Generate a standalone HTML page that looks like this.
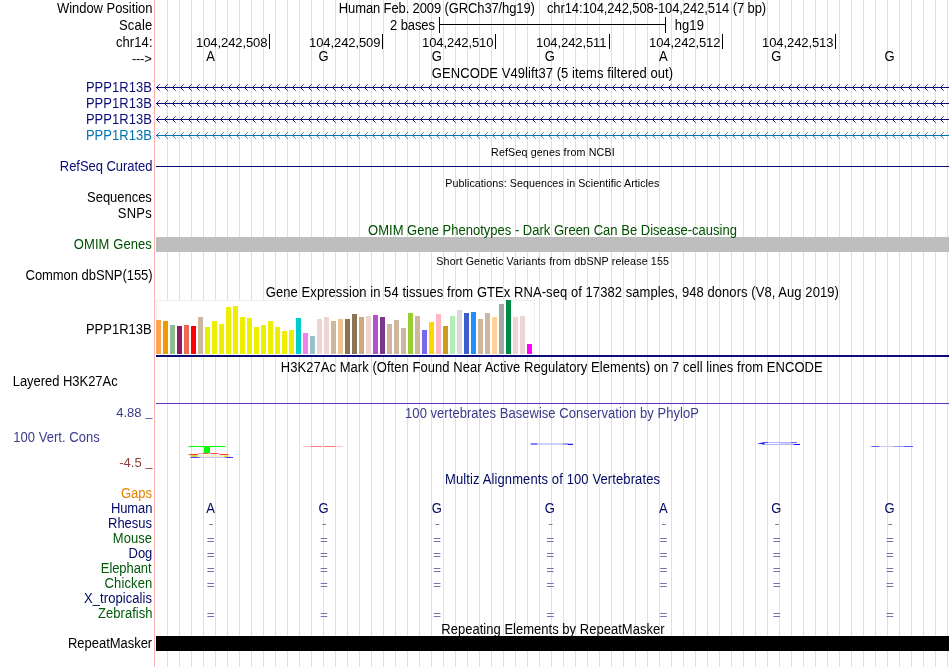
<!DOCTYPE html><html><head><meta charset="utf-8"><title>UCSC Genome Browser</title>
<style>
html,body{margin:0;padding:0;background:#fff;}
body{width:950px;height:667px;position:relative;overflow:hidden;font-family:"Liberation Sans",sans-serif;font-size:13px;color:#000;}
#w{position:absolute;left:0;top:0;width:950px;height:667px;will-change:transform;}
.t{position:absolute;white-space:pre;line-height:16px;height:16px;transform-origin:0 12px;transform:scaleY(1.06);}
.s{font-size:10.7px;}
.b{position:absolute;}
svg{position:absolute;left:0;top:0;}
</style></head><body><div id="w">
<svg width="950" height="667" shape-rendering="crispEdges"><defs><pattern id="gl" x="167" y="0" width="12" height="667" patternUnits="userSpaceOnUse"><rect x="0" y="0" width="1" height="667" fill="#dcdcff"/></pattern></defs><rect x="154" y="0" width="1" height="667" fill="#ffb4b4"/><rect x="167" y="0" width="783" height="667" fill="url(#gl)"/></svg>
<div class="b" style="left:439px;top:24px;width:227px;height:1px;background:#000"></div>
<div class="b" style="left:439px;top:17px;width:1px;height:16px;background:#000"></div>
<div class="b" style="left:665px;top:17px;width:1px;height:16px;background:#000"></div>
<div class="b" style="left:269px;top:34px;width:1px;height:15px;background:#000"></div>
<div class="b" style="left:382px;top:34px;width:1px;height:15px;background:#000"></div>
<div class="b" style="left:495px;top:34px;width:1px;height:15px;background:#000"></div>
<div class="b" style="left:609px;top:34px;width:1px;height:15px;background:#000"></div>
<div class="b" style="left:722px;top:34px;width:1px;height:15px;background:#000"></div>
<div class="b" style="left:835px;top:34px;width:1px;height:15px;background:#000"></div>
<svg width="950" height="667" shape-rendering="crispEdges"><defs><g id="cv"><path d="M1 -1h1v1h-1zM1 1h1v1h-1z" fill-opacity=".9"/><path d="M2 -2h1v1h-1zM2 2h1v1h-1z" fill-opacity=".8"/><path d="M3 -3h1v1h-1zM3 3h1v1h-1z" fill-opacity=".6"/></g><g id="c8"><use href="#cv" x="0"/><use href="#cv" x="8"/><use href="#cv" x="16"/><use href="#cv" x="24"/><use href="#cv" x="32"/><use href="#cv" x="40"/><use href="#cv" x="48"/><use href="#cv" x="56"/><use href="#cv" x="64"/><use href="#cv" x="72"/></g><g id="cr"><use href="#c8" x="0"/><use href="#c8" x="80"/><use href="#c8" x="160"/><use href="#c8" x="240"/><use href="#c8" x="320"/><use href="#c8" x="400"/><use href="#c8" x="480"/><use href="#c8" x="560"/><use href="#c8" x="640"/><use href="#cv" x="720"/><use href="#cv" x="728"/><use href="#cv" x="736"/><use href="#cv" x="744"/><use href="#cv" x="752"/><use href="#cv" x="760"/><use href="#cv" x="768"/><use href="#cv" x="776"/><use href="#cv" x="784"/></g></defs><g fill="#0c0c78"><rect x="156" y="87" width="793" height="1"/><use href="#cr" x="156" y="87"/></g><g fill="#0c0c78"><rect x="156" y="103" width="793" height="1"/><use href="#cr" x="156" y="103"/></g><g fill="#0c0c78"><rect x="156" y="119" width="793" height="1"/><use href="#cr" x="156" y="119"/></g><g fill="#0072b2"><rect x="156" y="135" width="793" height="1"/><use href="#cr" x="156" y="135"/></g><rect x="156" y="166" width="793" height="1" fill="#0c0c78"/><rect x="156" y="237" width="793" height="15" fill="#bebebe"/><rect x="156" y="300" width="379" height="55" fill="#fff"/><path d="M156.5 355V300.5H534.5V355" fill="none" stroke="#f0f0f0" stroke-width="1"/><rect x="156" y="320" width="5" height="34" fill="#FFA54F"/><rect x="163" y="321" width="5" height="33" fill="#EE9A00"/><rect x="170" y="325" width="5" height="29" fill="#8FBC8F"/><rect x="177" y="326" width="5" height="28" fill="#8B1C62"/><rect x="184" y="325" width="5" height="29" fill="#EE6A50"/><rect x="191" y="326" width="5" height="28" fill="#FF0000"/><rect x="198" y="317" width="5" height="37" fill="#CDB79E"/><rect x="205" y="327" width="5" height="27" fill="#EEEE00"/><rect x="212" y="321" width="5" height="33" fill="#EEEE00"/><rect x="219" y="324" width="5" height="30" fill="#EEEE00"/><rect x="226" y="307" width="5" height="47" fill="#EEEE00"/><rect x="233" y="306" width="5" height="48" fill="#EEEE00"/><rect x="240" y="317" width="5" height="37" fill="#EEEE00"/><rect x="247" y="318" width="5" height="36" fill="#EEEE00"/><rect x="254" y="327" width="5" height="27" fill="#EEEE00"/><rect x="261" y="325" width="5" height="29" fill="#EEEE00"/><rect x="268" y="321" width="5" height="33" fill="#EEEE00"/><rect x="275" y="327" width="5" height="27" fill="#EEEE00"/><rect x="282" y="331" width="5" height="23" fill="#EEEE00"/><rect x="289" y="330" width="5" height="24" fill="#EEEE00"/><rect x="296" y="318" width="5" height="36" fill="#00CDCD"/><rect x="303" y="333" width="5" height="21" fill="#EE82EE"/><rect x="310" y="336" width="5" height="18" fill="#9AC0CD"/><rect x="317" y="319" width="5" height="35" fill="#EED5D2"/><rect x="324" y="317" width="5" height="37" fill="#EED5D2"/><rect x="331" y="321" width="5" height="33" fill="#CDB79E"/><rect x="338" y="319" width="5" height="35" fill="#EEC591"/><rect x="345" y="319" width="5" height="35" fill="#8B7355"/><rect x="352" y="314" width="5" height="40" fill="#8B7355"/><rect x="359" y="317" width="5" height="37" fill="#CDAA7D"/><rect x="366" y="316" width="5" height="38" fill="#EED5D2"/><rect x="373" y="315" width="5" height="39" fill="#B452CD"/><rect x="380" y="317" width="5" height="37" fill="#7A378B"/><rect x="387" y="324" width="5" height="30" fill="#CDB79E"/><rect x="394" y="320" width="5" height="34" fill="#CDB79E"/><rect x="401" y="328" width="5" height="26" fill="#CDB79E"/><rect x="408" y="313" width="5" height="41" fill="#9ACD32"/><rect x="415" y="316" width="5" height="38" fill="#CDB79E"/><rect x="422" y="330" width="5" height="24" fill="#7A67EE"/><rect x="429" y="322" width="5" height="32" fill="#FFD700"/><rect x="436" y="314" width="5" height="40" fill="#FFB6C1"/><rect x="443" y="326" width="5" height="28" fill="#CD9B1D"/><rect x="450" y="316" width="5" height="38" fill="#B4EEB4"/><rect x="457" y="310" width="5" height="44" fill="#D9D9D9"/><rect x="464" y="313" width="5" height="41" fill="#3A5FCD"/><rect x="471" y="312" width="5" height="42" fill="#1E90FF"/><rect x="478" y="319" width="5" height="35" fill="#CDB79E"/><rect x="485" y="313" width="5" height="41" fill="#CDB79E"/><rect x="492" y="317" width="5" height="37" fill="#FFD39B"/><rect x="499" y="304" width="5" height="50" fill="#A6A6A6"/><rect x="506" y="300" width="5" height="54" fill="#008B45"/><rect x="513" y="317" width="5" height="37" fill="#EED5D2"/><rect x="520" y="316" width="5" height="38" fill="#EED5D2"/><rect x="527" y="344" width="5" height="10" fill="#FF00FF"/><rect x="156" y="355" width="793" height="2" fill="#0c0c78"/><rect x="156" y="403" width="793" height="1" fill="#5a32c8"/></svg>
<svg width="950" height="667"><rect x="188.6" y="446" width="37" height="1" fill="#00ff00"/><rect x="188" y="446" width="1" height="1" fill="#a0ffa0"/><rect x="225.4" y="446" width="0.8" height="1" fill="#a0ffa0"/><rect x="204" y="446" width="6" height="7" fill="#00ff00"/><rect x="198" y="453" width="21" height="1" fill="#ff9c9c"/><rect x="203" y="453" width="5" height="1" fill="#ff5050"/><rect x="211" y="453" width="7" height="1" fill="#ff5050"/><rect x="189" y="454" width="9" height="1" fill="#ff3838"/><rect x="188.3" y="454" width="1" height="1" fill="#ffb0b0"/><rect x="219.5" y="454" width="9" height="1" fill="#ff3838"/><rect x="228.3" y="454" width="0.8" height="1" fill="#ffb0b0"/><rect x="190.5" y="455" width="37" height="2" fill="#f2f2c8"/><rect x="190.5" y="455" width="6.5" height="2" fill="#d2d248"/><rect x="224" y="455.5" width="5" height="1.5" fill="#d8d860"/><rect x="227" y="456" width="3.5" height="1" fill="#e4e490"/><rect x="190.5" y="457" width="42.5" height="1" fill="#c4c4ff"/><rect x="190.5" y="457" width="9" height="1" fill="#4646ff"/><rect x="225.5" y="457" width="7.5" height="1" fill="#3c3cff"/><rect x="145.3" y="418" width="7.3" height="1" fill="#6a6ab4"/><rect x="145.3" y="468" width="7.3" height="1" fill="#a45c5c"/><rect x="303" y="446" width="40" height="1" fill="#ffc4c4"/><rect x="310.5" y="446" width="11" height="1" fill="#ff7878"/><rect x="324" y="446" width="11.5" height="1" fill="#ff7878"/><rect x="530.3" y="443.2" width="42.5" height="1.5" fill="#c0c0ff"/><rect x="530.8" y="443.4" width="6.5" height="1.3" fill="#5858ff"/><rect x="567.5" y="444" width="5.5" height="1" fill="#1010ff"/><rect x="563" y="443.4" width="5" height="1.2" fill="#8888ff"/><rect x="764" y="442" width="33" height="1" fill="#b4b4ff"/><rect x="764" y="442" width="4" height="1" fill="#5050ff"/><rect x="791" y="442" width="6" height="1" fill="#6a6aff"/><rect x="764" y="444" width="36" height="1" fill="#b4b4ff"/><rect x="779.5" y="443" width="14.5" height="1" fill="#d0d0ff"/><path d="M757 443.4L764.5 442.2V444.7Z" fill="#1818ff"/><rect x="794" y="444" width="6" height="1" fill="#1010ff"/><rect x="870.3" y="446" width="42.6" height="1" fill="#c8c8ff"/><rect x="871.7" y="446" width="7.5" height="1" fill="#5a5aff"/><rect x="893" y="446" width="11" height="1" fill="#9c9cff"/><rect x="904" y="446" width="9" height="1" fill="#5a5aff"/></svg>
<div class="t" style="left:56.90px;top:1.00px;letter-spacing:-0.032px;">Window Position</div>
<div class="t" style="left:118.95px;top:18.00px;letter-spacing:0.187px;">Scale</div>
<div class="t" style="left:115.90px;top:35.00px;letter-spacing:0.100px;">chr14:</div>
<div class="t" style="left:132.00px;top:51.00px;letter-spacing:-0.267px;transform:none;">---&gt;</div>
<div class="t" style="left:338.80px;top:1.00px;letter-spacing:-0.120px;">Human Feb. 2009 (GRCh37/hg19)</div>
<div class="t" style="left:546.90px;top:1.00px;letter-spacing:-0.096px;">chr14:104,242,508-104,242,514 (7 bp)</div>
<div class="t" style="left:390.05px;top:18.00px;letter-spacing:-0.108px;">2 bases</div>
<div class="t" style="left:674.80px;top:18.00px;letter-spacing:0.050px;">hg19</div>
<div class="t" style="left:196.10px;top:35.00px;letter-spacing:-0.095px;transform:none;">104,242,508</div>
<div class="t" style="left:309.10px;top:35.00px;letter-spacing:-0.095px;transform:none;">104,242,509</div>
<div class="t" style="left:422.10px;top:35.00px;letter-spacing:-0.095px;transform:none;">104,242,510</div>
<div class="t" style="left:536.10px;top:35.00px;letter-spacing:-0.095px;transform:none;">104,242,511</div>
<div class="t" style="left:649.10px;top:35.00px;letter-spacing:-0.095px;transform:none;">104,242,512</div>
<div class="t" style="left:762.10px;top:35.00px;letter-spacing:-0.095px;transform:none;">104,242,513</div>
<div class="t" style="left:206.20px;top:49.00px;">A</div>
<div class="t" style="left:206.20px;top:501.00px;color:#000a64;">A</div>
<div class="t" style="left:318.45px;top:49.00px;">G</div>
<div class="t" style="left:318.45px;top:501.00px;color:#000a64;">G</div>
<div class="t" style="left:431.65px;top:49.00px;">G</div>
<div class="t" style="left:431.65px;top:501.00px;color:#000a64;">G</div>
<div class="t" style="left:544.85px;top:49.00px;">G</div>
<div class="t" style="left:544.85px;top:501.00px;color:#000a64;">G</div>
<div class="t" style="left:659.00px;top:49.00px;">A</div>
<div class="t" style="left:659.00px;top:501.00px;color:#000a64;">A</div>
<div class="t" style="left:771.25px;top:49.00px;">G</div>
<div class="t" style="left:771.25px;top:501.00px;color:#000a64;">G</div>
<div class="t" style="left:884.45px;top:49.00px;">G</div>
<div class="t" style="left:884.45px;top:501.00px;color:#000a64;">G</div>
<div class="t" style="left:431.85px;top:66.00px;letter-spacing:0.073px;">GENCODE V49lift37 (5 items filtered out)</div>
<div class="t" style="left:85.90px;top:80.00px;letter-spacing:0.043px;color:#0c0c78;">PPP1R13B</div>
<div class="t" style="left:85.90px;top:96.00px;letter-spacing:0.043px;color:#0c0c78;">PPP1R13B</div>
<div class="t" style="left:85.90px;top:112.00px;letter-spacing:0.043px;color:#0c0c78;">PPP1R13B</div>
<div class="t" style="left:85.90px;top:128.00px;letter-spacing:0.043px;color:#0072b2;">PPP1R13B</div>
<div class="t s" style="left:491.05px;top:144.00px;letter-spacing:0.143px;">RefSeq genes from NCBI</div>
<div class="t" style="left:59.80px;top:159.00px;letter-spacing:-0.046px;color:#0c0c78;">RefSeq Curated</div>
<div class="t s" style="left:445.35px;top:175.00px;letter-spacing:0.057px;">Publications: Sequences in Scientific Articles</div>
<div class="t" style="left:87.05px;top:190.00px;letter-spacing:-0.031px;">Sequences</div>
<div class="t" style="left:117.85px;top:206.00px;letter-spacing:0.233px;">SNPs</div>
<div class="t" style="left:368.10px;top:223.00px;letter-spacing:0.006px;color:#005000;">OMIM Gene Phenotypes - Dark Green Can Be Disease-causing</div>
<div class="t" style="left:73.80px;top:237.00px;letter-spacing:0.083px;color:#005000;">OMIM Genes</div>
<div class="t s" style="left:436.30px;top:253.00px;letter-spacing:0.139px;">Short Genetic Variants from dbSNP release 155</div>
<div class="t" style="left:25.55px;top:268.00px;letter-spacing:-0.053px;">Common dbSNP(155)</div>
<div class="t" style="left:265.85px;top:285.00px;letter-spacing:0.064px;">Gene Expression in 54 tissues from GTEx RNA-seq of 17382 samples, 948 donors (V8, Aug 2019)</div>
<div class="t" style="left:85.90px;top:322.00px;letter-spacing:0.014px;">PPP1R13B</div>
<div class="t" style="left:280.70px;top:360.00px;letter-spacing:0.053px;">H3K27Ac Mark (Often Found Near Active Regulatory Elements) on 7 cell lines from ENCODE</div>
<div class="t" style="left:12.70px;top:374.00px;letter-spacing:-0.036px;">Layered H3K27Ac</div>
<div class="t" style="left:405.10px;top:406.00px;letter-spacing:0.040px;color:#3c3c8c;">100 vertebrates Basewise Conservation by PhyloP</div>
<div class="t" style="left:116.15px;top:405.00px;letter-spacing:0.033px;color:#3c3c8c;transform:none;">4.88</div>
<div class="t" style="left:13.20px;top:430.00px;letter-spacing:0.038px;color:#3c3c8c;">100 Vert. Cons</div>
<div class="t" style="left:119.30px;top:455.00px;letter-spacing:-0.017px;color:#8c3c3c;transform:none;">-4.5</div>
<div class="t" style="left:445.10px;top:472.00px;letter-spacing:0.111px;color:#000a64;">Multiz Alignments of 100 Vertebrates</div>
<div class="t" style="left:120.95px;top:486.00px;letter-spacing:0.017px;color:#e68200;">Gaps</div>
<div class="t" style="left:110.90px;top:501.00px;letter-spacing:-0.100px;color:#000a64;">Human</div>
<div class="t" style="left:108.00px;top:516.00px;color:#000a64;">Rhesus</div>
<div class="t" style="left:112.80px;top:531.00px;letter-spacing:0.050px;color:#005a0a;">Mouse</div>
<div class="t" style="left:128.60px;top:546.00px;letter-spacing:-0.050px;color:#000a64;">Dog</div>
<div class="t" style="left:100.80px;top:561.00px;letter-spacing:-0.079px;color:#005a0a;">Elephant</div>
<div class="t" style="left:104.55px;top:576.00px;letter-spacing:0.117px;color:#005a0a;">Chicken</div>
<div class="t" style="left:84.10px;top:591.00px;letter-spacing:0.059px;color:#000a64;">X_tropicalis</div>
<div class="t" style="left:98.10px;top:606.00px;letter-spacing:0.019px;color:#005a0a;">Zebrafish</div>
<div class="t" style="left:441.30px;top:622.00px;letter-spacing:0.020px;">Repeating Elements by RepeatMasker</div>
<div class="t" style="left:68.00px;top:636.00px;letter-spacing:-0.032px;">RepeatMasker</div>
<svg width="950" height="667" fill="#7474ac"><rect x="209.2" y="524" width="3.7" height="1"/><rect x="322.4" y="524" width="3.7" height="1"/><rect x="435.6" y="524" width="3.7" height="1"/><rect x="548.8" y="524" width="3.7" height="1"/><rect x="662.0" y="524" width="3.7" height="1"/><rect x="775.2" y="524" width="3.7" height="1"/><rect x="888.4" y="524" width="3.7" height="1"/><rect x="207.4" y="538" width="6.6" height="1"/><rect x="207.4" y="541" width="6.6" height="1"/><rect x="320.6" y="538" width="6.6" height="1"/><rect x="320.6" y="541" width="6.6" height="1"/><rect x="433.8" y="538" width="6.6" height="1"/><rect x="433.8" y="541" width="6.6" height="1"/><rect x="547.0" y="538" width="6.6" height="1"/><rect x="547.0" y="541" width="6.6" height="1"/><rect x="660.2" y="538" width="6.6" height="1"/><rect x="660.2" y="541" width="6.6" height="1"/><rect x="773.4" y="538" width="6.6" height="1"/><rect x="773.4" y="541" width="6.6" height="1"/><rect x="886.6" y="538" width="6.6" height="1"/><rect x="886.6" y="541" width="6.6" height="1"/><rect x="207.4" y="553" width="6.6" height="1"/><rect x="207.4" y="556" width="6.6" height="1"/><rect x="320.6" y="553" width="6.6" height="1"/><rect x="320.6" y="556" width="6.6" height="1"/><rect x="433.8" y="553" width="6.6" height="1"/><rect x="433.8" y="556" width="6.6" height="1"/><rect x="547.0" y="553" width="6.6" height="1"/><rect x="547.0" y="556" width="6.6" height="1"/><rect x="660.2" y="553" width="6.6" height="1"/><rect x="660.2" y="556" width="6.6" height="1"/><rect x="773.4" y="553" width="6.6" height="1"/><rect x="773.4" y="556" width="6.6" height="1"/><rect x="886.6" y="553" width="6.6" height="1"/><rect x="886.6" y="556" width="6.6" height="1"/><rect x="207.4" y="568" width="6.6" height="1"/><rect x="207.4" y="571" width="6.6" height="1"/><rect x="320.6" y="568" width="6.6" height="1"/><rect x="320.6" y="571" width="6.6" height="1"/><rect x="433.8" y="568" width="6.6" height="1"/><rect x="433.8" y="571" width="6.6" height="1"/><rect x="547.0" y="568" width="6.6" height="1"/><rect x="547.0" y="571" width="6.6" height="1"/><rect x="660.2" y="568" width="6.6" height="1"/><rect x="660.2" y="571" width="6.6" height="1"/><rect x="773.4" y="568" width="6.6" height="1"/><rect x="773.4" y="571" width="6.6" height="1"/><rect x="886.6" y="568" width="6.6" height="1"/><rect x="886.6" y="571" width="6.6" height="1"/><rect x="207.4" y="583" width="6.6" height="1"/><rect x="207.4" y="586" width="6.6" height="1"/><rect x="320.6" y="583" width="6.6" height="1"/><rect x="320.6" y="586" width="6.6" height="1"/><rect x="433.8" y="583" width="6.6" height="1"/><rect x="433.8" y="586" width="6.6" height="1"/><rect x="547.0" y="583" width="6.6" height="1"/><rect x="547.0" y="586" width="6.6" height="1"/><rect x="660.2" y="583" width="6.6" height="1"/><rect x="660.2" y="586" width="6.6" height="1"/><rect x="773.4" y="583" width="6.6" height="1"/><rect x="773.4" y="586" width="6.6" height="1"/><rect x="886.6" y="583" width="6.6" height="1"/><rect x="886.6" y="586" width="6.6" height="1"/><rect x="207.4" y="613" width="6.6" height="1"/><rect x="207.4" y="616" width="6.6" height="1"/><rect x="320.6" y="613" width="6.6" height="1"/><rect x="320.6" y="616" width="6.6" height="1"/><rect x="433.8" y="613" width="6.6" height="1"/><rect x="433.8" y="616" width="6.6" height="1"/><rect x="547.0" y="613" width="6.6" height="1"/><rect x="547.0" y="616" width="6.6" height="1"/><rect x="660.2" y="613" width="6.6" height="1"/><rect x="660.2" y="616" width="6.6" height="1"/><rect x="773.4" y="613" width="6.6" height="1"/><rect x="773.4" y="616" width="6.6" height="1"/><rect x="886.6" y="613" width="6.6" height="1"/><rect x="886.6" y="616" width="6.6" height="1"/></svg>
<div class="b" style="left:156px;top:636px;width:793px;height:15px;background:#000"></div>
</div></body></html>
